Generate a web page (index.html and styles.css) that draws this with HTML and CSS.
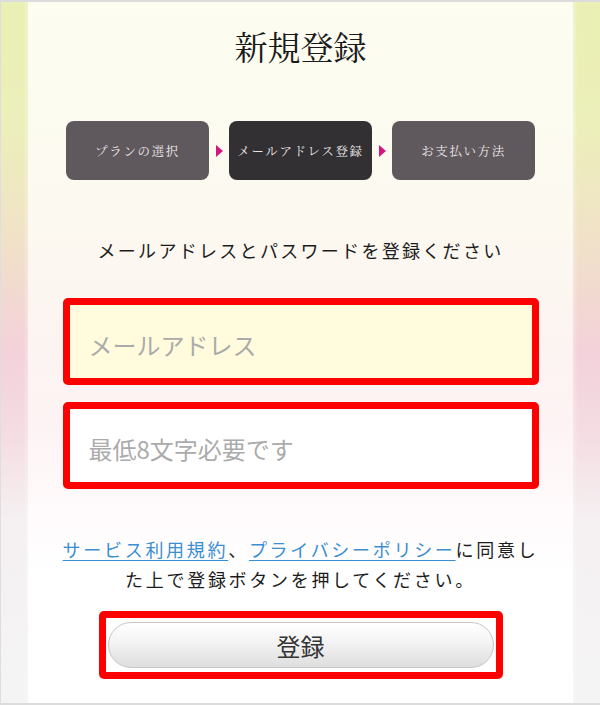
FILE: index.html
```html
<!DOCTYPE html>
<html lang="ja">
<head>
<meta charset="utf-8">
<title>新規登録</title>
<link rel="stylesheet" href="styles.css">
</head>
<body>
<div class="frame">
  <div class="strip strip-left"></div>
  <main class="panel">
    <h1 class="title">新規登録</h1>
    <div class="steps">
      <div class="step">プランの選択</div>
      <svg class="arrow" width="20" height="12" viewBox="0 0 20 12"><polygon points="7,0 14,6 7,12" fill="#d4177f"/></svg>
      <div class="step step-active">メールアドレス登録</div>
      <svg class="arrow" width="20" height="12" viewBox="0 0 20 12"><polygon points="7,0 14,6 7,12" fill="#d4177f"/></svg>
      <div class="step">お支払い方法</div>
    </div>
    <p class="lead">メールアドレスとパスワードを登録ください</p>
    <form class="form">
      <input class="field field-email" type="email" placeholder="メールアドレス">
      <input class="field" type="password" placeholder="最低8文字必要です">
      <p class="agree"><a href="#">サービス利用規約</a>、<a href="#">プライバシーポリシー</a>に同意し<br>た上で登録ボタンを押してください。</p>
      <div class="submit-box">
        <button class="submit" type="button">登録</button>
      </div>
    </form>
  </main>
  <div class="strip strip-right"></div>
</div>
</body>
</html>
```
FILE: styles.css
```css
html, body {
  margin: 0;
  padding: 0;
}
body {
  width: 600px;
  height: 705px;
  overflow: hidden;
  font-family: "Noto Sans CJK JP", "Noto Sans", sans-serif;
}
.frame {
  box-sizing: border-box;
  width: 600px;
  height: 705px;
  display: flex;
  border-top: 2px solid #dcdcdc;
  border-bottom: 2px solid #dcdcdc;
  border-left: 1px solid #dedede;
}
.strip {
  width: 27px;
  flex: none;
  background: linear-gradient(180deg, #eaf0b3 0%, #ecefba 18%, #f0e3c6 32%, #f3d1da 50%, #f4dde3 62%, #f5f0f1 74%, #f4f4f4 100%);
}
.strip-left {
  box-shadow: inset -3px 0 3px rgba(255,255,255,0.25);
}
.strip-right {
  box-shadow: inset 3px 0 3px rgba(255,255,255,0.25);
}
.panel {
  flex: 1;
  display: flex;
  flex-direction: column;
  align-items: center;
  background: linear-gradient(180deg, #fdfdf1 0%, #fcfaf0 28%, #fcf5f1 45%, #fdf3f4 60%, #fffafb 72%, #ffffff 82%);
}
.title {
  margin: 22px 0 0;
  font-family: "Noto Serif CJK JP", "Noto Sans CJK JP", serif;
  font-weight: 400;
  font-size: 33px;
  line-height: 44px;
  color: #1a1a1a;
}
.steps {
  display: flex;
  align-items: center;
  margin-top: 53px;
}
.step {
  box-sizing: border-box;
  width: 143px;
  height: 59px;
  border-radius: 8px;
  background: #5f585c;
  color: #ece8ea;
  display: flex;
  align-items: center;
  justify-content: center;
  font-family: "Noto Serif CJK JP", "Noto Sans CJK JP", serif;
  font-size: 12.5px;
  letter-spacing: 1.6px;
}
.step-active {
  background: #323032;
}
.arrow {
  display: block;
  flex: none;
}
.lead {
  margin: 58px 0 0;
  font-size: 18px;
  line-height: 24px;
  letter-spacing: 2.3px;
  color: #1c1c1c;
}
.form {
  display: flex;
  flex-direction: column;
  align-items: center;
  margin-top: 36px;
}
.field {
  box-sizing: border-box;
  display: block;
  width: 476px;
  height: 87px;
  margin: 0;
  border: 7px solid #ff0000;
  border-radius: 5px;
  padding: 6px 0 0 19px;
  background: #ffffff;
  font-family: "Noto Sans CJK JP", "Noto Sans", sans-serif;
  font-size: 24px;
  color: #333;
  outline: none;
}
.field + .field {
  margin-top: 17px;
}
.field-email {
  background: #fffbdc;
}
.field::placeholder {
  color: #ababab;
}
.agree {
  margin: 45px 0 0;
  text-align: center;
  font-size: 18px;
  line-height: 30px;
  letter-spacing: 2.7px;
  color: #1c1c1c;
}
.agree a {
  color: #3a8ed2;
  text-decoration: underline;
  text-underline-offset: 3px;
}
.submit-box {
  box-sizing: border-box;
  width: 404px;
  height: 68px;
  margin-top: 17px;
  border: 7px solid #ff0000;
  border-radius: 5px;
  padding: 4px 2px;
  background: #ffffff;
}
.submit {
  display: block;
  width: 100%;
  height: 46px;
  margin: 0;
  border: 1px solid #c6c6c6;
  border-radius: 23px;
  background: linear-gradient(180deg, #ffffff 0%, #f3f3f3 45%, #dedede 100%);
  font-family: "Noto Sans CJK JP", "Noto Sans", sans-serif;
  font-size: 24px;
  color: #333333;
  padding: 0;
}
```
